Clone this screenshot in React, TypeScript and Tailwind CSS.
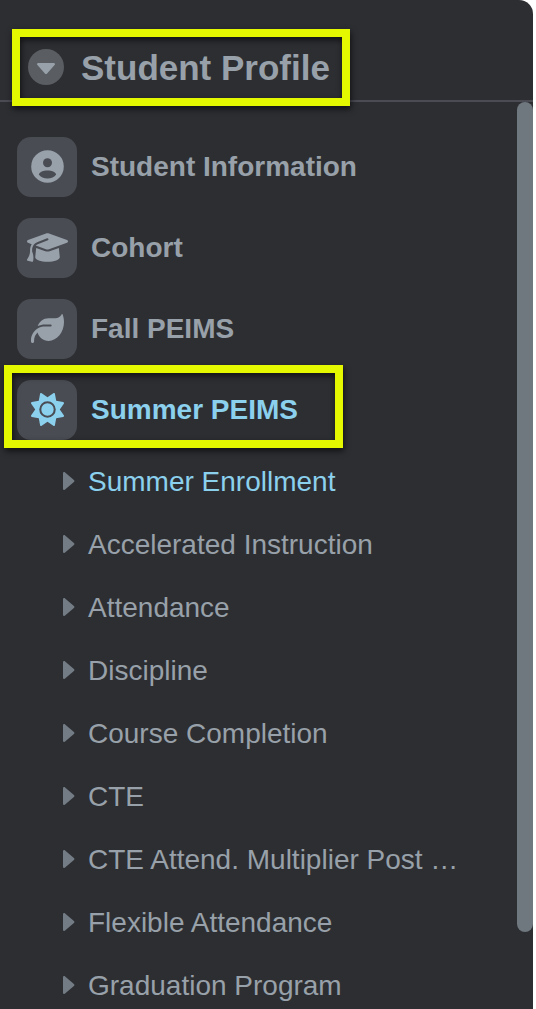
import type { ReactNode } from 'react'
import { FaGraduationCap, FaLeaf, FaSun } from 'react-icons/fa6'

const sections: { label: string; icon: ReactNode; active?: boolean }[] = [
  { label: 'Student Information', icon: <AccountIcon /> },
  { label: 'Cohort', icon: <FaGraduationCap className="w-[41px] h-[33px]" /> },
  { label: 'Fall PEIMS', icon: <FaLeaf className="size-[33px]" /> },
  { label: 'Summer PEIMS', icon: <FaSun className="size-[33px]" />, active: true },
]

const summerPages = [
  'Summer Enrollment',
  'Accelerated Instruction',
  'Attendance',
  'Discipline',
  'Course Completion',
  'CTE',
  'CTE Attend. Multiplier Post …',
  'Flexible Attendance',
  'Graduation Program',
]

export default function App() {
  return (
    <div className="h-[1009px] bg-white overflow-hidden font-['Liberation_Sans',Arial,sans-serif]">
      <aside className="relative flex flex-col w-[533px] h-full rounded-tr-[14px] bg-[#2d2e32] text-[#98a1a9]">
        {/* Header */}
        <header className="flex items-center shrink-0 h-[102px] pt-[34px] pl-7 border-b-2 border-[#4a4b53]">
          <span className="flex items-center justify-center size-9 rounded-full bg-[#5a5d62]">
            <svg width="18" height="12" viewBox="0 0 18 12" fill="currentColor" className="mt-1">
              <path d="M1.3 0h15.4c1.1 0 1.7 1.3.9 2.1l-7.5 8.4c-.6.7-1.6.7-2.2 0L.4 2.1C-.4 1.3.2 0 1.3 0z" />
            </svg>
          </span>
          <h1 className="ml-[17px] pt-px text-[35px] leading-10 font-bold">Student Profile</h1>
        </header>

        <div className="flex flex-1 min-h-0">
          <nav className="flex-1 min-w-0 pt-[35px] overflow-hidden">
            <ul className="flex flex-col gap-[21px] pl-[17px]">
              {sections.map(({ label, icon, active }) => (
                <li key={label} className={`flex items-center ${active ? 'text-[#8bd0ed]' : ''}`}>
                  <span className="flex items-center justify-center size-[60px] pb-0.5 rounded-[14px] bg-[#4a4c54]">
                    {icon}
                  </span>
                  <span className="ml-3.5 text-[28px] leading-8 font-bold">{label}</span>
                </li>
              ))}
            </ul>

            {/* Summer PEIMS pages */}
            <ul className="mt-2.5 pl-[63px]">
              {summerPages.map((page, i) => (
                <li key={page} className="flex items-center h-[63px]">
                  <svg width="12" height="18" viewBox="0 0 12 18" className="shrink-0 -mt-0.5 text-[#737c85]" fill="currentColor">
                    <path d="M0 1.3C0 .2 1.3-.4 2.1.4l8.8 7.5c.7.6.7 1.6 0 2.2l-8.8 7.5c-.8.8-2.1.2-2.1-.9z" />
                  </svg>
                  <span className={`ml-[13px] whitespace-nowrap text-[28px] leading-8 ${i === 0 ? 'text-[#8bd0ed]' : ''}`}>
                    {page}
                  </span>
                </li>
              ))}
            </ul>
          </nav>

          {/* Scrollbar */}
          <div className="shrink-0 w-4 h-[830px] rounded-full bg-[#6f777f]" />
        </div>

        {/* Callouts */}
        <div className="absolute left-3 top-[29px] w-[338px] h-[77px] border-8 border-[#e4f900] drop-shadow-[1px_3px_3px_rgba(0,0,0,0.65)]" />
        <div className="absolute left-1 top-[365px] w-[339px] h-[83px] border-8 border-[#e4f900] drop-shadow-[1px_3px_3px_rgba(0,0,0,0.65)]" />
      </aside>
    </div>
  )
}

function AccountIcon() {
  return (
    <svg width="33" height="33" viewBox="0 0 33 33">
      <circle cx="16.5" cy="16.5" r="16.3" fill="currentColor" />
      <circle cx="16.5" cy="12.8" r="4.5" fill="#4a4c54" />
      <path d="M7.8 24.4c1-2.9 4.4-4 8.7-4s7.700 1.100 8.700 4c-1.800 2.500-5 4.100-8.700 4.100s-6.900-1.600-8.700-4.100z" fill="#4a4c54" />
    </svg>
  )
}
